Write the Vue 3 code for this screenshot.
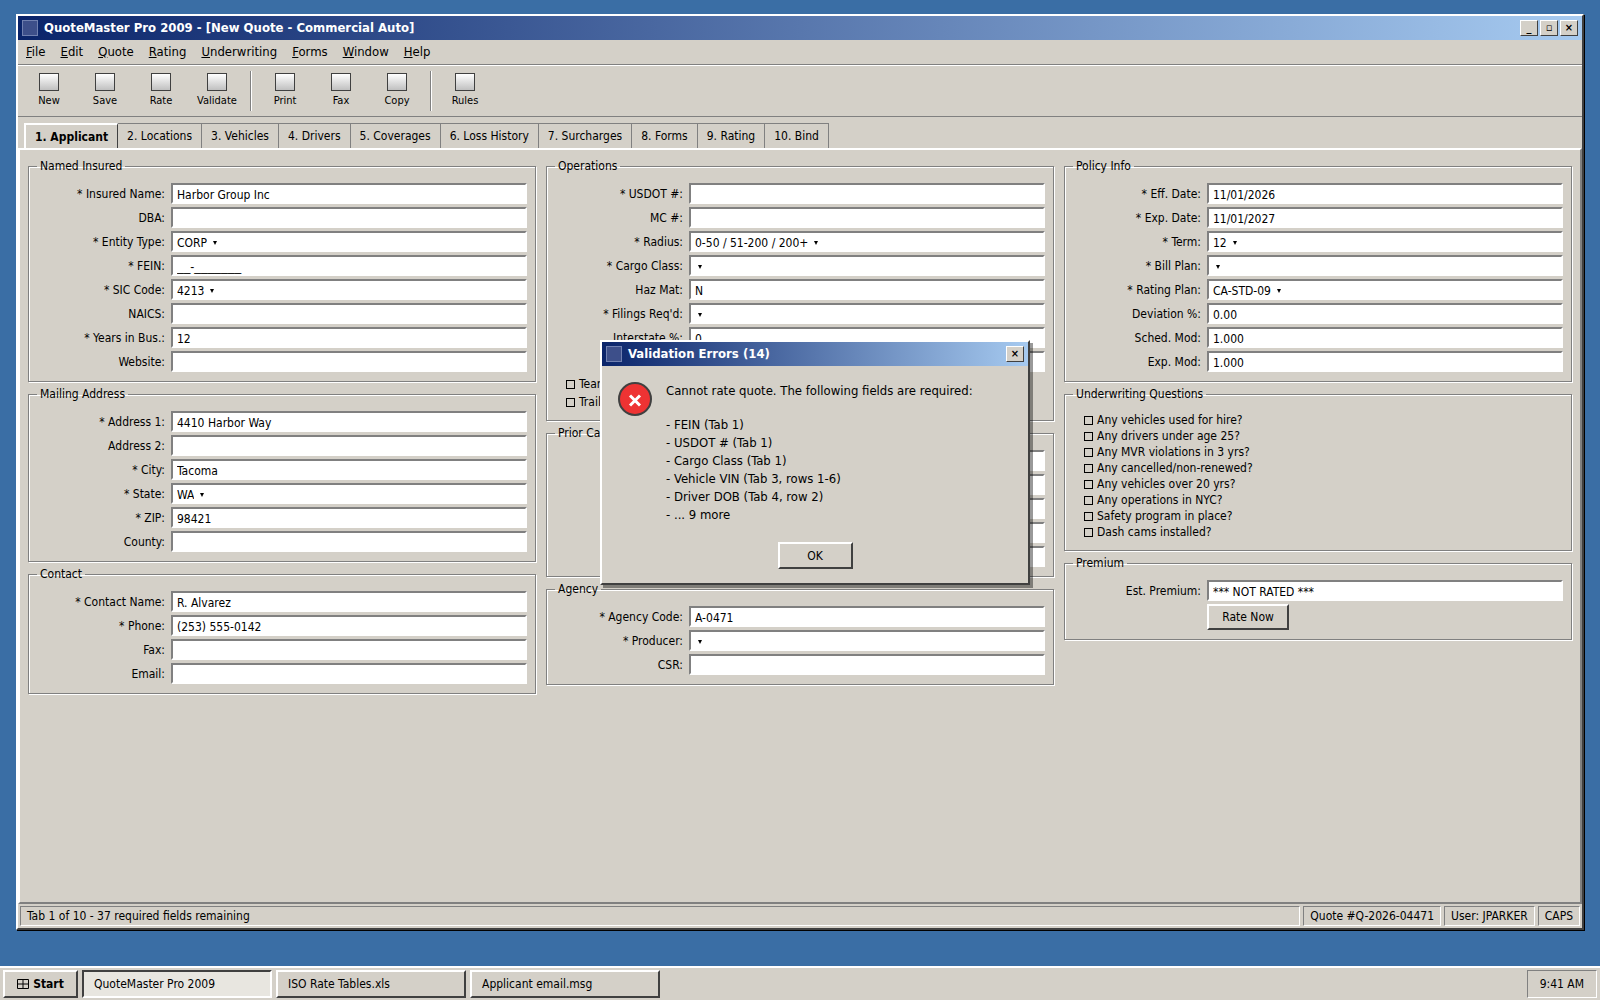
<script setup>
const menus = ['File', 'Edit', 'Quote', 'Rating', 'Underwriting', 'Forms', 'Window', 'Help']
const toolGroups = [['New', 'Save', 'Rate', 'Validate'], ['Print', 'Fax', 'Copy'], ['Rules']]
const tabs = ['Applicant', 'Locations', 'Vehicles', 'Drivers', 'Coverages', 'Loss History', 'Surcharges', 'Forms', 'Rating', 'Bind']

const text = (label, value = '') => ({ label, value })
const mask = (label, value) => ({ label, value, masked: true })
const pick = (label, value = '') => ({ label, value, select: true })
const bare = (name) => ({ name, value: '' })

const columns = [
  [
    {
      title: 'Named Insured',
      rows: [
        text('* Insured Name:', 'Harbor Group Inc'),
        text('DBA:'),
        pick('* Entity Type:', 'CORP'),
        mask('* FEIN:', '__-_______'),
        pick('* SIC Code:', '4213'),
        text('NAICS:'),
        text('* Years in Bus.:', '12'),
        text('Website:'),
      ],
    },
    {
      title: 'Mailing Address',
      rows: [
        text('* Address 1:', '4410 Harbor Way'),
        text('Address 2:'),
        text('* City:', 'Tacoma'),
        pick('* State:', 'WA'),
        text('* ZIP:', '98421'),
        text('County:'),
      ],
    },
    {
      title: 'Contact',
      rows: [
        text('* Contact Name:', 'R. Alvarez'),
        text('* Phone:', '(253) 555-0142'),
        text('Fax:'),
        text('Email:'),
      ],
    },
  ],
  [
    {
      title: 'Operations',
      rows: [
        text('* USDOT #:'),
        text('MC #:'),
        pick('* Radius:', '0-50 / 51-200 / 200+'),
        pick('* Cargo Class:'),
        text('Haz Mat:', 'N'),
        pick("* Filings Req'd:"),
        text('Interstate %:', '0'),
        bare('Units'),
      ],
      options: ['Team', 'Trailer'],
    },
    {
      title: 'Prior Carrier',
      rows: [bare('Carrier'), bare('Policy number'), bare('Prior premium'), bare('Losses'), bare('Years')],
    },
    {
      title: 'Agency',
      rows: [text('* Agency Code:', 'A-0471'), pick('* Producer:'), text('CSR:')],
    },
  ],
  [
    {
      title: 'Policy Info',
      rows: [
        text('* Eff. Date:', '11/01/2026'),
        text('* Exp. Date:', '11/01/2027'),
        pick('* Term:', '12'),
        pick('* Bill Plan:'),
        pick('* Rating Plan:', 'CA-STD-09'),
        text('Deviation %:', '0.00'),
        text('Sched. Mod:', '1.000'),
        text('Exp. Mod:', '1.000'),
      ],
    },
    {
      title: 'Underwriting Questions',
      questions: [
        'Any vehicles used for hire?',
        'Any drivers under age 25?',
        'Any MVR violations in 3 yrs?',
        'Any cancelled/non-renewed?',
        'Any vehicles over 20 yrs?',
        'Any operations in NYC?',
        'Safety program in place?',
        'Dash cams installed?',
      ],
    },
    {
      title: 'Premium',
      rows: [text('Est. Premium:', '*** NOT RATED ***')],
      action: 'Rate Now',
    },
  ],
]

const errors = [
  'FEIN (Tab 1)',
  'USDOT # (Tab 1)',
  'Cargo Class (Tab 1)',
  'Vehicle VIN (Tab 3, rows 1-6)',
  'Driver DOB (Tab 4, row 2)',
  '... 9 more',
]

const tasks = ['QuoteMaster Pro 2009', 'ISO Rate Tables.xls', 'Applicant email.msg']
</script>

<template>
  <div class="desktop">
    <div class="work">
      <main class="window">
        <header class="titlebar">
          <span class="app-icon"></span>
          <h1 class="caption">QuoteMaster Pro 2009 - [New Quote - Commercial Auto]</h1>
          <button class="sys" type="button" aria-label="Minimize">_</button>
          <button class="sys" type="button" aria-label="Restore">▫</button>
          <button class="sys" type="button" aria-label="Close">×</button>
        </header>

        <nav class="menubar">
          <button v-for="m in menus" :key="m" class="menu" type="button"><u>{{ m[0] }}</u>{{ m.slice(1) }}</button>
        </nav>

        <div class="toolbar">
          <div v-for="(group, g) in toolGroups" :key="g" class="tool-group">
            <button v-for="t in group" :key="t" class="tool" type="button">
              <span class="tool-icon"></span>{{ t }}
            </button>
          </div>
        </div>

        <div class="tabs" role="tablist">
          <button
            v-for="(t, i) in tabs"
            :key="t"
            class="tab"
            :class="{ active: i === 0 }"
            type="button"
            role="tab"
            :aria-selected="i === 0"
          >{{ i + 1 }}. {{ t }}</button>
        </div>

        <form class="page" @submit.prevent>
          <div v-for="(col, c) in columns" :key="c" class="column">
            <fieldset v-for="(box, b) in col" :key="box.title" class="group">
              <legend>{{ box.title }}</legend>
              <div v-for="(row, r) in box.rows" :key="r" class="row">
                <label v-if="row.label" :for="`f${c}-${b}-${r}`">{{ row.label }}</label>
                <span v-if="row.select" class="field combo" :class="{ blank: !row.value }">
                  <select :id="`f${c}-${b}-${r}`">
                    <option>{{ row.value }}</option>
                  </select>
                </span>
                <input
                  v-else
                  :id="`f${c}-${b}-${r}`"
                  class="field"
                  :class="{ masked: row.masked, unlabelled: !row.label }"
                  type="text"
                  :aria-label="row.name"
                  :value="row.value"
                />
              </div>
              <div v-if="box.options" class="options">
                <label v-for="o in box.options" :key="o" class="check"><input type="checkbox" />{{ o }}</label>
              </div>
              <div v-if="box.questions" class="questions">
                <label v-for="q in box.questions" :key="q" class="check"><input type="checkbox" />{{ q }}</label>
              </div>
              <button v-if="box.action" class="push rate" type="button">{{ box.action }}</button>
            </fieldset>
          </div>
        </form>

        <footer class="status">
          <span class="pane grow">Tab 1 of 10 - 37 required fields remaining</span>
          <span class="pane">Quote #Q-2026-04471</span>
          <span class="pane">User: JPARKER</span>
          <span class="pane">CAPS</span>
        </footer>

        <section class="dialog" role="dialog" aria-labelledby="dialog-title">
          <header class="titlebar">
            <span class="app-icon"></span>
            <h2 id="dialog-title" class="caption">Validation Errors (14)</h2>
            <button class="sys" type="button" aria-label="Close">×</button>
          </header>
          <div class="message">
            <svg class="stop" width="34" height="34" viewBox="0 0 34 34">
              <circle cx="17" cy="17" r="16" fill="#ee3333" stroke="#404040" stroke-width="2" />
              <path d="M12 13.5l10 10M22 13.5l-10 10" stroke="#fff" stroke-width="3" />
            </svg>
            <div class="message-text">
              <p>Cannot rate quote. The following fields are required:</p>
              <ul>
                <li v-for="e in errors" :key="e">- {{ e }}</li>
              </ul>
            </div>
          </div>
          <button class="push ok" type="button">OK</button>
        </section>
      </main>
    </div>

    <footer class="taskbar">
      <button class="push start" type="button">
        <svg width="12" height="10" viewBox="0 0 12 10">
          <path d="M.5 .5h11v9h-11zM6 .5v9M.5 5h11" fill="none" stroke="#000" />
        </svg>
        Start
      </button>
      <button v-for="(t, i) in tasks" :key="t" class="push task" :class="{ pressed: i === 0 }" type="button">{{ t }}</button>
      <time class="clock">9:41 AM</time>
    </footer>
  </div>
</template>

<style>
body {
  margin: 0;
}
</style>

<style scoped>
.desktop {
  --face: #d4d0c8;
  --shade: #808080;
  --dark: #404040;
  display: flex;
  flex-direction: column;
  min-height: 100vh;
  background: #3a6ea5;
  color: #000;
  font-family: Tahoma, "DejaVu Sans Condensed", "Noto Sans", sans-serif;
  font-size: 12px;
  line-height: 16px;
}
.desktop *,
.desktop {
  box-sizing: border-box;
}
button,
input,
select {
  margin: 0;
  font: inherit;
  color: inherit;
}
.work {
  flex: 1;
  display: flex;
  padding: 14px 16px 36px;
}
.window {
  position: relative;
  flex: 1;
  display: flex;
  flex-direction: column;
  background: var(--face);
  border: 2px solid;
  border-color: #fff var(--dark) var(--dark) #fff;
  box-shadow: 1px 1px 0 #000;
}
.titlebar {
  display: flex;
  align-items: center;
  gap: 2px;
  height: 24px;
  padding: 0 4px;
  background: linear-gradient(90deg, #0a246a, #a6caf0);
}
.app-icon {
  width: 16px;
  height: 16px;
  margin-right: 4px;
  background: #3d4f8a;
  border: 1px solid #7080b0;
}
.caption {
  flex: 1;
  margin: 0;
  color: #fff;
  font-size: 13px;
  font-weight: bold;
  line-height: 16px;
}
.sys {
  width: 18px;
  height: 16px;
  padding: 0;
  background: var(--face);
  border: 1px solid;
  border-color: #fff var(--dark) var(--dark) #fff;
  font-size: 11px;
  font-weight: bold;
  line-height: 14px;
}
.menubar {
  display: flex;
  gap: 1px;
  height: 25px;
  padding-left: 1px;
  border-bottom: 1px solid var(--shade);
}
.menu {
  padding: 0 7px;
  background: none;
  border: 0;
  font-size: 13px;
}
.toolbar {
  display: flex;
  height: 52px;
  padding: 4px 3px;
  border-top: 1px solid #fff;
  border-bottom: 1px solid var(--shade);
}
.tool-group {
  display: flex;
}
.tool-group + .tool-group::before {
  content: "";
  margin: 1px 5px;
  border-left: 1px solid var(--shade);
  border-right: 1px solid #fff;
}
.tool {
  display: flex;
  flex-direction: column;
  align-items: center;
  gap: 2px;
  width: 56px;
  padding: 3px 0 0;
  background: none;
  border: 0;
  font-size: 11px;
}
.tool-icon {
  width: 20px;
  height: 18px;
  background: linear-gradient(#fff, #c0c0c0);
  border: 1px solid var(--dark);
}
.tabs {
  display: flex;
  align-items: flex-end;
  padding: 6px 6px 0;
}
.tab {
  height: 25px;
  padding: 0 9px;
  background: var(--face);
  border: 1px solid var(--shade);
  border-width: 1px 1px 0 0;
}
.tab.active {
  border-width: 2px 1px 0 2px;
  border-color: #fff var(--dark) #fff #fff;
  font-weight: bold;
}
.page {
  flex: 1;
  display: grid;
  grid-template-columns: repeat(3, minmax(0, 1fr));
  align-items: start;
  gap: 10px;
  padding: 8px;
  border: 2px solid;
  border-color: #fff var(--shade) var(--shade) #fff;
}
.column {
  display: flex;
  flex-direction: column;
  gap: 4px;
}
.group {
  display: flex;
  flex-direction: column;
  gap: 3px;
  min-width: 0;
  margin: 0;
  padding: 9px 8px;
  border: 1px solid var(--shade);
  box-shadow: 1px 1px 0 #fff, inset 1px 1px 0 #fff;
}
.group legend {
  padding: 0 3px;
}
.row {
  display: flex;
  align-items: center;
  gap: 6px;
}
.row label {
  width: 128px;
  text-align: right;
}
.field {
  flex: 1;
  min-width: 0;
  height: 21px;
  padding: 2px 4px 0;
  background: #fff;
  border: 2px solid;
  border-color: var(--shade) #fff #fff var(--shade);
}
.unlabelled {
  margin-left: 134px;
}
.masked {
  font-family: "Liberation Sans", Arial, sans-serif;
}
.combo {
  display: flex;
  align-items: center;
  gap: 6px;
}
.combo.blank {
  gap: 3px;
}
.combo select {
  field-sizing: content;
  min-width: 0;
  padding: 0;
  appearance: none;
  background: none;
  border: 0;
}
.combo::after {
  content: "";
  border: 2px solid transparent;
  border-top: 4px solid #000;
  border-bottom: 0;
}
.options,
.questions {
  display: flex;
  flex-direction: column;
  padding: 1px 11px;
}
.check {
  display: flex;
  align-items: center;
  gap: 4px;
}
.options {
  padding: 0 11px;
}
.options .check {
  line-height: 18px;
}
.check input {
  width: 9px;
  height: 9px;
  appearance: none;
  border: 1px solid #000;
}
.push {
  background: var(--face);
  border: 2px solid;
  border-color: #fff var(--dark) var(--dark) #fff;
}
.rate {
  width: 82px;
  height: 26px;
  margin-left: 134px;
  padding: 0;
}
.status {
  display: flex;
  gap: 3px;
  padding: 2px;
}
.pane {
  padding: 1px 6px;
  border: 1px solid;
  border-color: var(--shade) #fff #fff var(--shade);
}
.grow {
  flex: 1;
}
.dialog {
  position: absolute;
  top: 324px;
  left: calc(50% - 200px);
  width: 430px;
  display: flex;
  flex-direction: column;
  background: var(--face);
  border: 2px solid;
  border-color: #fff var(--dark) var(--dark) #fff;
  box-shadow: 3px 3px 0 rgba(0, 0, 0, 0.4);
}
.message {
  display: flex;
  gap: 14px;
  padding: 16px 16px 18px;
}
.message-text {
  font-size: 13px;
  line-height: 18px;
}
.message p {
  margin: 0 0 16px;
}
.message ul {
  margin: 0;
  padding: 0;
  list-style: none;
}
.ok {
  align-self: center;
  width: 75px;
  height: 27px;
  margin-bottom: 14px;
}
.taskbar {
  display: flex;
  gap: 4px;
  padding: 2px 3px;
  background: var(--face);
  border-top: 2px solid #fff;
}
.taskbar .push {
  height: 28px;
}
.start {
  display: flex;
  align-items: center;
  justify-content: center;
  gap: 4px;
  width: 75px;
  padding: 0;
  font-weight: bold;
}
.task {
  width: 190px;
  padding: 0 10px;
  text-align: left;
}
.task.pressed {
  background: #e8e6e0;
  border-color: var(--dark) #fff #fff var(--dark);
}
.clock {
  margin-left: auto;
  padding: 5px 12px;
  border: 1px solid;
  border-color: var(--shade) #fff #fff var(--shade);
}
</style>
